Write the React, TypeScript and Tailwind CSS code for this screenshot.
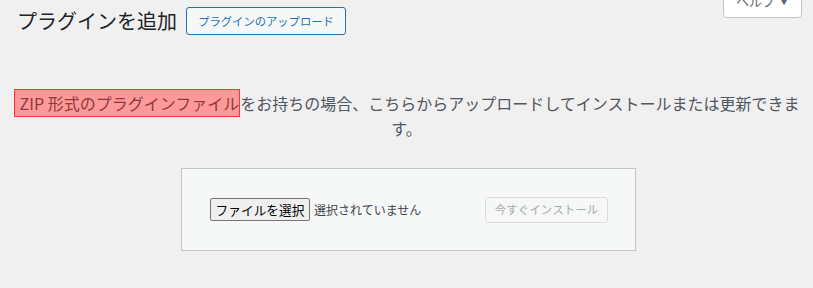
import React from "react";

const font = { fontFamily: '"Noto Sans CJK JP", "Noto Sans", sans-serif' };

function HelpTab() {
  return (
    <div className="mt-[-12px] mr-[11px] flex h-[30px] w-[79px] items-end justify-center rounded-b-[4px] border border-[#c3c4c7] bg-white pb-[8px] text-[13px] leading-[16px] text-[#646970]">
      ヘルプ <span className="ml-1 text-[10px]">▼</span>
    </div>
  );
}

function App() {
  return (
    <div className="h-[288px] w-full overflow-hidden bg-[#f0f0f1]" style={font}>
      <div className="flex items-start justify-between">
        <div className="flex items-center pl-[17px] pt-[7px]">
          <h1 className="text-[20px] leading-[28px] text-[#1d2327]">プラグインを追加</h1>
          <button className="ml-[9px] h-[28px] w-[160px] rounded-[3px] border-[1.5px] border-[#2271b1] bg-[#f6f7f7] text-[11.3px] text-[#2271b1]">
            プラグインのアップロード
          </button>
        </div>
        <HelpTab />
      </div>

      <p className="mx-[10px] mt-[56px] text-center text-[16px] leading-[25px] text-[#50575e]">
        <span className="border border-[#f33] bg-[#f99] py-[1px] pl-[5px] pr-0 text-[#8a3b3e]">ZIP 形式のプラグインファイル</span>
        をお持ちの場合、こちらからアップロードしてインストールまたは更新できます。
      </p>

      <div className="mt-[27px] flex justify-center pl-[4px]">
        <div className="flex h-[83px] w-[455px] items-center justify-between border border-[#c3c4c7] bg-[#f6f7f7] pl-[28px] pr-[27px]">
          <div className="flex items-center">
            <button className="h-[23px] w-[100px] rounded-[2px] border border-[#767676] bg-[#efefef] text-[12.7px] text-black">
              ファイルを選択
            </button>
            <span className="ml-[4px] text-[12px] text-[#3c434a]">選択されていません</span>
          </div>
          <button className="h-[26px] w-[123px] rounded-[3px] border border-[#dcdcde] bg-[#f6f7f7] text-[11.5px] text-[#a7aaad]">
            今すぐインストール
          </button>
        </div>
      </div>
    </div>
  );
}

export default App;
